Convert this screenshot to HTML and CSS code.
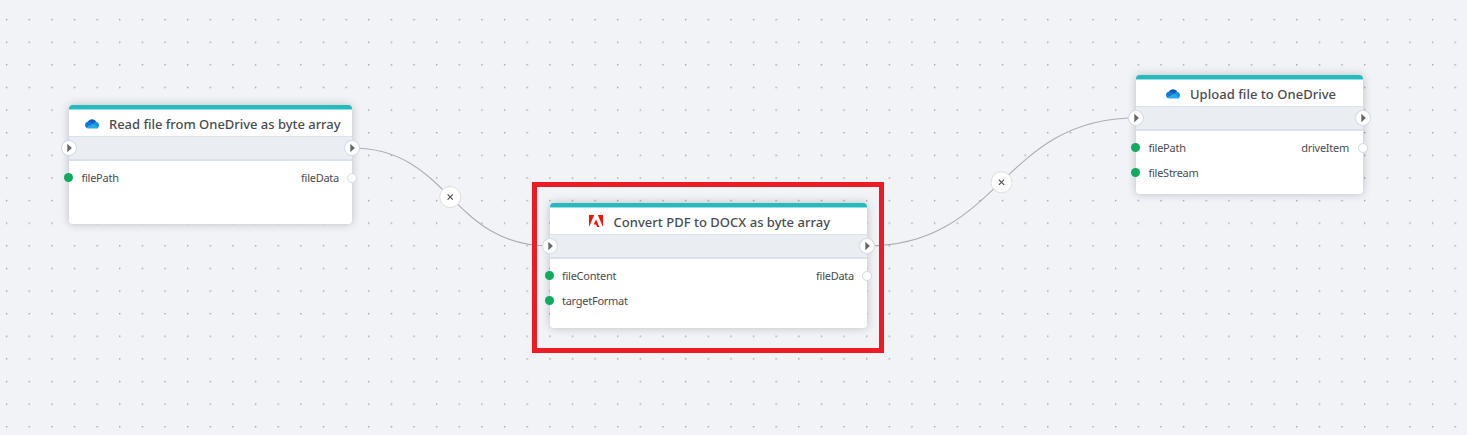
FILE: index.html
```html
<!DOCTYPE html>
<html lang="en">
<head>
<meta charset="utf-8">
<title>Flow designer</title>
<link rel="stylesheet" href="styles.css">
</head>
<body>
<main class="canvas">
  <svg class="layer" width="1467" height="435">
    <defs>
      <pattern id="dots" x="5.9" y="18.9" width="22.635" height="22.62" patternUnits="userSpaceOnUse">
        <circle cx="0.75" cy="0.75" r="0.7" fill="#85878d"/>
      </pattern>
      <symbol id="cloud" viewBox="0 0 14 10">
        <path d="M2.4 4C3.5-.5 9.5-1 11.3 3L8 7H2z" fill="#0f5db7"/>
        <path d="M3 2.8C0 2.8-.9 7 1.3 8.9L8 5C6.5 3.3 5 2.5 3 2.8z" fill="#1478d4"/>
        <path d="M8 5C9 3 11 2.7 12 3.3 14.8 4 14.6 9 12 9.2L6 7z" fill="#1490df"/>
        <path d="M1.2 8.7L8 4.8 13.3 8.2C13 9.2 12.4 9.5 11.6 9.5H3.3C2.4 9.5 1.7 9.3 1.2 8.7z" fill="#28a8ea"/>
      </symbol>
      <symbol id="adobe" viewBox="0 0 14 12">
        <path d="M0 0H5.2L0 12zM8.8 0H14V12zM7 4.3L10.3 12H8.1L7.1 9.6H4.7z" fill="#fa0f00"/>
      </symbol>
      <symbol id="play" viewBox="0 0 15 15">
        <circle cx="7.5" cy="7.5" r="7" fill="#fff" stroke="#d2dde8" stroke-width="1"/>
        <path d="M5.9 3.4L10.2 7.5 5.9 11.6z" fill="#65676b"/>
      </symbol>
    </defs>
    <rect width="1467" height="435" fill="url(#dots)"/>
    <g class="wires">
      <path d="M352 148C450 148 450 246 550 246"/>
      <path d="M867 246C1001 246 1001 118 1136 118"/>
    </g>
    <g class="remove">
      <circle cx="450.2" cy="197" r="10.5"/><path d="M447.6 194.4l5.2 5.2m0-5.2l-5.2 5.2"/>
      <circle cx="1001.5" cy="182.3" r="10.5"/><path d="M998.9 179.7l5.2 5.2m0-5.2l-5.2 5.2"/>
    </g>
  </svg>

  <section class="node read">
    <header class="title"><svg class="cloud"><use href="#cloud"/></svg><span>Read file from OneDrive as byte array</span></header>
    <div class="band"><svg class="play"><use href="#play"/></svg><svg class="play"><use href="#play"/></svg></div>
    <div class="ports">
      <div class="port"><i class="dot in"></i><span>filePath</span><span class="out-name">fileData</span><i class="dot out"></i></div>
    </div>
  </section>

  <section class="node convert">
    <header class="title"><svg class="adobe"><use href="#adobe"/></svg><span>Convert PDF to DOCX as byte array</span></header>
    <div class="band"><svg class="play"><use href="#play"/></svg><svg class="play"><use href="#play"/></svg></div>
    <div class="ports">
      <div class="port"><i class="dot in"></i><span>fileContent</span><span class="out-name">fileData</span><i class="dot out"></i></div>
      <div class="port"><i class="dot in"></i><span>targetFormat</span></div>
    </div>
  </section>

  <section class="node upload">
    <header class="title"><svg class="cloud"><use href="#cloud"/></svg><span>Upload file to OneDrive</span></header>
    <div class="band"><svg class="play"><use href="#play"/></svg><svg class="play"><use href="#play"/></svg></div>
    <div class="ports">
      <div class="port"><i class="dot in"></i><span>filePath</span><span class="out-name">driveItem</span><i class="dot out"></i></div>
      <div class="port"><i class="dot in"></i><span>fileStream</span></div>
    </div>
  </section>
  <div class="highlight"></div>
</main>
</body>
</html>
```
FILE: styles.css
```css
* { box-sizing: border-box; }
body { margin: 0; }
.canvas {
  position: relative;
  width: 1467px;
  height: 435px;
  overflow: hidden;
  background: #f1f3f7;
  color: #4a4c50;
  font-family: "Noto Sans", sans-serif;
}
.layer { display: block; }
.wires { fill: none; stroke: #adaeb3; stroke-width: 1.1; }
.remove circle { fill: #fff; stroke: #dedede; stroke-width: 1; }
.remove path { fill: none; stroke: #505155; stroke-width: 1.2; }
.node {
  position: absolute;
  background: #fff;
  border-top: 4px solid #26babd;
  border-radius: 4px;
  box-shadow: 0 0 9px rgba(40, 45, 60, .27);
}
.read { left: 69px; top: 105px; width: 283px; height: 119px; }
.convert { left: 549.5px; top: 203px; width: 317.5px; height: 125px; }
.upload { left: 1136px; top: 75px; width: 227px; height: 119px; }
.title {
  display: flex;
  align-items: center;
  height: 27px;
  padding: 2px 0 0 16px;
  border-top: 1px solid #94dfe0;
  font-size: 13px;
  font-weight: 500;
  letter-spacing: -.03px;
  line-height: 20px;
  white-space: nowrap;
}
.convert .title { padding-left: 39px; letter-spacing: .02px; }
.convert .title span { margin-left: 1px; }
.upload .title { padding-left: 30px; letter-spacing: .03px; }
.cloud { width: 14px; height: 10px; margin-right: 10px; }
.adobe { width: 14px; height: 12px; margin-right: 10px; margin-top: -2px; }
.band {
  display: flex;
  justify-content: space-between;
  align-items: center;
  height: 25px;
  border: solid #dae2ec;
  border-width: 1px 0 2px;
  background: #eaedf2;
}
.play { flex: none; width: 16px; height: 16px; margin: -1px -8px 0; overflow: visible; }
.ports { padding-top: 4px; }
.port {
  display: flex;
  align-items: center;
  height: 25px;
  font-size: 11px;
  letter-spacing: -.26px;
  line-height: 16px;
}
.dot { flex: none; width: 9px; height: 9px; border-radius: 50%; }
.in { margin: 0 8.5px 0 -5px; background: #12ab5d; }
.out { width: 10px; height: 10px; margin: 0 -5px 0 8px; border: 1px solid #d2dde8; background: #fff; }
.out-name { margin-left: auto; }
.upload .out-name { margin-right: 1px; }
.highlight {
  position: absolute;
  left: 532px;
  top: 182px;
  width: 352px;
  height: 171px;
  border: 5px solid #ed1c24;
}
```
